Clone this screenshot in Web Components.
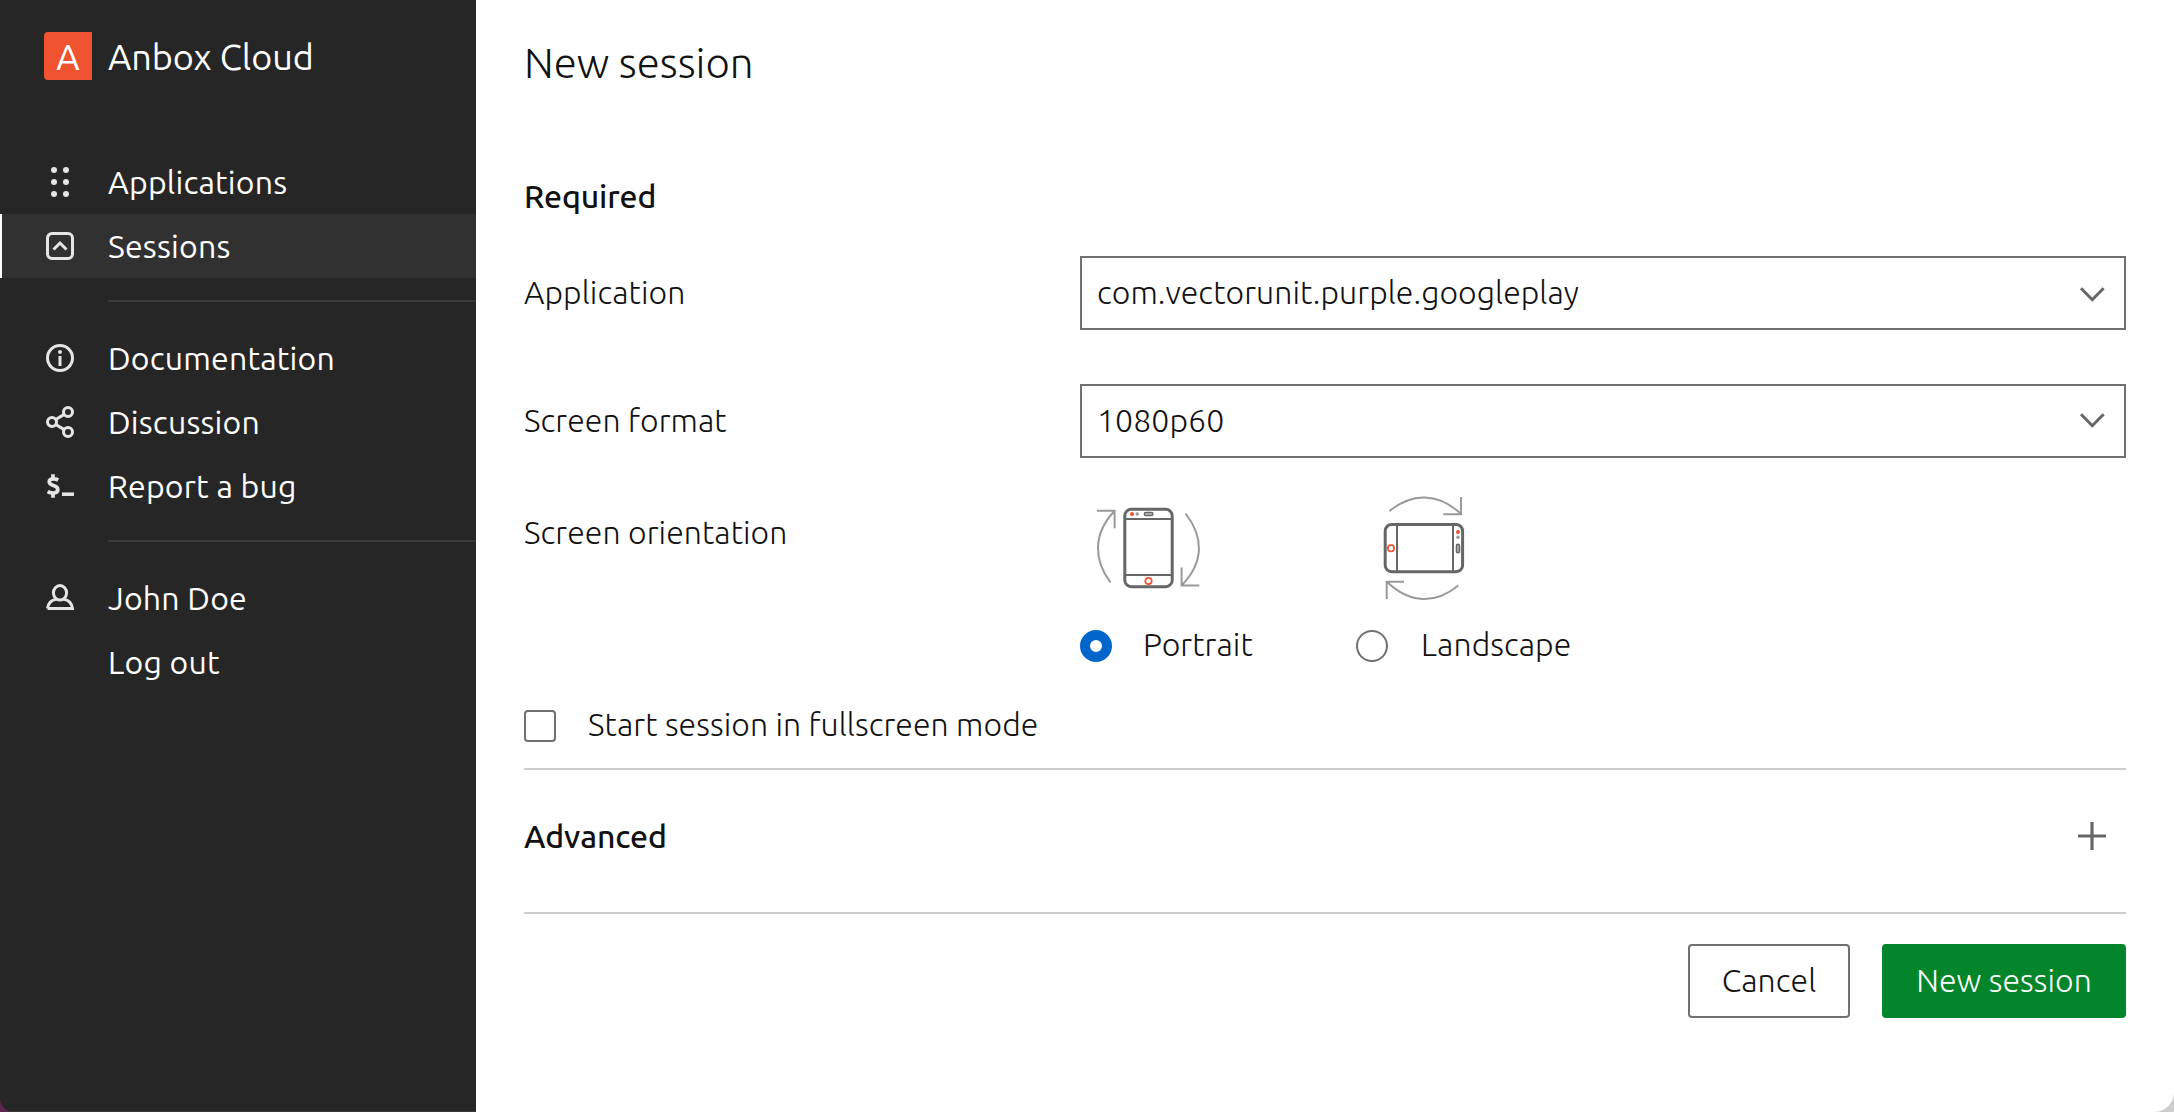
<!DOCTYPE html>
<html lang="en">
<head>
<meta charset="utf-8">
<title>Anbox Cloud</title>
<style>
html{height:100%;background:linear-gradient(90deg,#5e2750 0 50%,#cdcdcd 50%)}
body{margin:0;height:1112px;overflow:hidden;font-family:Ubuntu,"Open Sans",sans-serif;font-size:32px;line-height:48px;font-weight:300;letter-spacing:.07px;color:#111}
</style>
</head>
<body>
<anbox-app></anbox-app>
<script>
const define=(name,html,init)=>{
  const tpl=document.createElement('template');
  tpl.innerHTML=html;
  customElements.define(name,class extends HTMLElement{
    constructor(){
      super();
      this.attachShadow({mode:'open'}).append(tpl.content.cloneNode(true));
    }
    connectedCallback(){ if(init) init(this,this.shadowRoot); }
  });
};

const GLYPHS={
  applications:'<g fill="#e5e5e5"><circle cx="10" cy="4" r="3"/><circle cx="22" cy="4" r="3"/><circle cx="10" cy="16" r="3"/><circle cx="22" cy="16" r="3"/><circle cx="10" cy="28" r="3"/><circle cx="22" cy="28" r="3"/></g>',
  sessions:'<rect x="3.5" y="3.5" width="25" height="25" rx="4.5"/><path d="M9.5 19.5 16 13l6.500 6.500"/>',
  info:'<circle cx="16" cy="16" r="12.500"/><path d="M16 14v10"/><circle cx="16" cy="10" r="2" fill="#e5e5e5" stroke="none"/>',
  share:'<circle cx="24" cy="6" r="4.500"/><circle cx="24" cy="26" r="4.500"/><circle cx="8" cy="16" r="4.500"/><path d="M11.800 13.500 20.200 8.400M11.800 18.500l8.400 5.100"/>',
  terminal:'<path d="M14.200 10C12.700 9.200 11.200 8.800 9.400 8.800c-2.600 0-4.200 1.100-4.200 3 0 5 8.600 2.600 8.600 7.700 0 2.300-1.800 3.600-4.700 3.600-2.100 0-3.900-.5-5.500-1.400M9 4.300v5M9 22.500v5.300" stroke-width="3.700"/><path d="M18 24.200h12" stroke-width="3.500"/>',
  user:'<ellipse cx="16" cy="10.800" rx="6.600" ry="7.300"/><path d="M3.500 26.500h25c-.8-5-4-8.500-8.700-9.200M3.500 26.500c.8-5 4-8.500 8.700-9.200"/>'
};

define('nav-icon',`<style>:host{display:block;width:32px;height:32px;flex:none}svg{display:block}</style>
<svg width="32" height="32" viewBox="0 0 32 32" fill="none" stroke="#e5e5e5" stroke-width="3"></svg>`,
(el,root)=>{
  const g=GLYPHS[el.getAttribute('name')];
  const svg=root.querySelector('svg');
  if(g) svg.innerHTML=g;
  if(el.getAttribute('name')==='applications') svg.setAttribute('stroke','none');
});

define('nav-item',`<style>
:host{display:flex;box-sizing:border-box;height:64px;align-items:center;padding-left:44px;gap:32px;font-weight:400;color:#fff}
:host([active]){background:#313131;box-shadow:inset 2px 0 #fff}
span{white-space:nowrap;letter-spacing:.2px}
</style><nav-icon></nav-icon><span><slot></slot></span>`,
(el,root)=>{
  const i=document.createElement('nav-icon');
  i.setAttribute('name',el.getAttribute('icon')||'');
  root.querySelector('nav-icon').replaceWith(i);
});

define('nav-group',`<style>
:host{display:flex;flex-direction:column}
:host([ruled])::before{content:"";height:2px;margin:22px 0 24px 108px;background:#3b3b3b}
</style><slot></slot>`);

define('brand-logo',`<style>
:host{display:flex;align-items:center;gap:16px;padding:32px 0 0 44px;height:48px;font-weight:400;font-size:36px;color:#fff}
.tag{width:48px;height:48px;box-sizing:border-box;border-radius:4px 0 0 4px;background:#f0532f;text-align:center;line-height:50px;flex:none}
.name{height:48px;line-height:50px;letter-spacing:-.05px;white-space:nowrap}
</style><div class="tag">A</div><div class="name"><slot></slot></div>`);

define('side-nav',`<style>
:host{display:flex;flex-direction:column;width:476px;flex:none;background:#262626;box-shadow:inset 0 -1px #3a3a3a}
nav{margin-top:70px}
</style><brand-logo>Anbox Cloud</brand-logo>
<nav>
<nav-group><nav-item icon="applications">Applications</nav-item><nav-item icon="sessions" active>Sessions</nav-item></nav-group>
<nav-group ruled><nav-item icon="info">Documentation</nav-item><nav-item icon="share">Discussion</nav-item><nav-item icon="terminal">Report a bug</nav-item></nav-group>
<nav-group ruled><nav-item icon="user">John Doe</nav-item><nav-item>Log out</nav-item></nav-group>
</nav>`);

define('form-row',`<style>
:host{display:grid;grid-template-columns:556px 1fr}
.label{padding-top:var(--label-top,12px)}
</style><div class="label"></div><slot></slot>`,
(el,root)=>{root.querySelector('.label').textContent=el.getAttribute('label')});

define('select-box',`<style>
:host{display:flex;justify-content:space-between;box-sizing:border-box;height:74px;border:2px solid #707070;padding:10px 18px 0 15px}
svg{display:block;margin-top:var(--chevron-top,16px)}
</style><span><slot></slot></span>
<svg width="28" height="20" viewBox="0 0 28 20" fill="none" stroke="#666" stroke-width="3"><path d="M3 4.200 14.300 15.700 25.600 4.200"/></svg>`);

define('phone-portrait',`<style>:host{display:block}svg{display:block}</style>
<svg width="140" height="120" viewBox="1080 488 140 120" fill="none">
<g stroke="#999" stroke-width="2"><path d="M1110.500 582.500C1093.500 560 1093 534 1114 511.500M1097 510.800h17.600v17.400M1185.500 513.500C1204 537 1204 562 1182 585M1181.600 567.500v17.900h17.700"/></g>
<rect x="1124.800" y="509.300" width="47.400" height="77.400" rx="6.500" stroke="#666" stroke-width="3"/>
<path d="M1125 519h47M1125 575h47" stroke="#666" stroke-width="2"/>
<circle cx="1132" cy="514" r="2" fill="#f0532f"/><circle cx="1137.200" cy="514" r="1.700" fill="#999"/>
<rect x="1144.300" y="512.400" width="8.600" height="3.200" rx="1.600" fill="#aaa" stroke="#666" stroke-width="1.400"/>
<circle cx="1148.500" cy="581" r="3.200" stroke="#f0532f" stroke-width="1.700"/>
</svg>`);

define('phone-landscape',`<style>:host{display:block}svg{display:block}</style>
<svg width="140" height="120" viewBox="1356 488 140 120" fill="none">
<g stroke="#999" stroke-width="2"><path d="M1389.500 511C1412 492.500 1438 492.500 1460.500 513.500M1461 497v17.300h-17.700M1458.300 585.500C1436 604 1410 604 1387.500 582.300M1404 581.800h-17.300V599"/></g>
<rect x="1385.200" y="524.500" width="77.400" height="47.200" rx="6.500" stroke="#666" stroke-width="3"/>
<path d="M1397 525v47M1453 525v47" stroke="#666" stroke-width="2"/>
<circle cx="1458" cy="532" r="2" fill="#f0532f"/><circle cx="1458" cy="537.200" r="1.700" fill="#999"/>
<rect x="1456.400" y="544.300" width="3.200" height="8.600" rx="1.600" fill="#aaa" stroke="#666" stroke-width="1.400"/>
<circle cx="1391" cy="548.300" r="3.200" stroke="#f0532f" stroke-width="1.700"/>
</svg>`);

define('radio-option',`<style>
:host{display:flex;flex-direction:column;width:276px;gap:12px}
.row{display:flex;gap:var(--radio-gap,32px)}
.dot{width:32px;height:32px;margin-top:10px;box-sizing:border-box;border-radius:50%;border:2px solid #707070;flex:none}
:host([checked]) .dot{border:10px solid #06c}
</style><slot name="picture"></slot><div class="row"><div class="dot"></div><span><slot></slot></span></div>`);

define('check-option',`<style>
:host{display:flex;gap:32px}
.box{width:32px;height:32px;margin-top:10px;box-sizing:border-box;border:2px solid #707070;border-radius:4px;flex:none}
</style><div class="box"></div><span><slot></slot></span>`);

define('accordion-head',`<style>
:host{display:flex;justify-content:space-between;border:solid #ccc;border-width:2px 0;padding:42px 20px 52px 0;font-weight:500;letter-spacing:-.1px}
svg{display:block;margin-top:10px}
</style><span><slot></slot></span>
<svg width="28" height="28" viewBox="0 0 28 28" stroke="#666" stroke-width="3.200"><path d="M0 14h28M14 0v28"/></svg>`);

define('action-button',`<style>
:host{display:block;box-sizing:border-box;height:74px;width:162px;padding-top:10px;border:2px solid #707070;border-radius:4px;text-align:center}
:host([positive]){width:244px;background:#03862b;border-color:#03862b;color:#fff}
</style><slot></slot>`);

define('session-form',`<style>
:host{display:flex;flex-direction:column;flex:1;background:#fff;padding:31px 48px 0}
h1{margin:0;font-size:42px;line-height:64px;font-weight:300;letter-spacing:0}
h2{margin:77px 0 36px;font-size:32px;line-height:48px;font-weight:500;letter-spacing:-.1px}
form-row+form-row{margin-top:54px}
form-row.orient{margin-top:30px;--label-top:20px}
.options{display:flex}
check-option{margin:32px 0 20px}
.actions{display:flex;justify-content:flex-end;gap:32px;margin-top:30px}
</style>
<h1>New session</h1>
<h2>Required</h2>
<form-row label="Application"><select-box style="--chevron-top:16px">com.vectorunit.purple.googleplay</select-box></form-row>
<form-row label="Screen format"><select-box style="--chevron-top:14px">1080p60</select-box></form-row>
<form-row class="orient" label="Screen orientation"><div class="options">
<radio-option checked style="--radio-gap:31px"><phone-portrait slot="picture"></phone-portrait>Portrait</radio-option>
<radio-option style="--radio-gap:33px"><phone-landscape slot="picture"></phone-landscape>Landscape</radio-option>
</div></form-row>
<check-option>Start session in fullscreen mode</check-option>
<accordion-head>Advanced</accordion-head>
<div class="actions"><action-button>Cancel</action-button><action-button positive>New session</action-button></div>`);

define('anbox-app',`<style>
:host{display:flex;height:1112px;overflow:hidden;border-radius:0 0 20px 14px}
</style><side-nav></side-nav><session-form></session-form>`);
</script>
</body>
</html>
